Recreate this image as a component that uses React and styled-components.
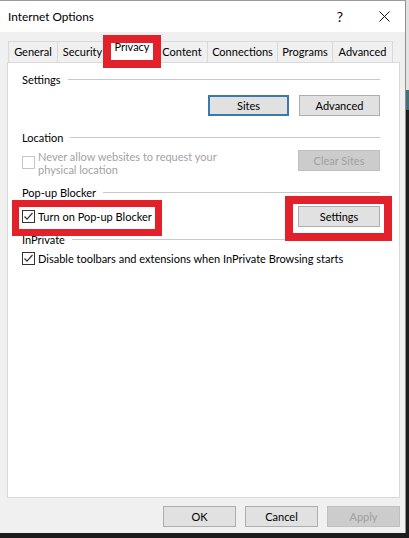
import React from 'react';
import styled, { createGlobalStyle } from 'styled-components';

const FONT = '"Segoe UI", Lato, "Open Sans", sans-serif';
const RED = '#e3212b';

const GlobalStyle = createGlobalStyle`
  html, body {
    margin: 0;
    padding: 0;
  }
  body {
    width: 409px;
    height: 538px;
    overflow: hidden;
    font-family: ${FONT};
    background: linear-gradient(
      to bottom,
      #e2e2e2 0,
      #e2e2e2 90px,
      #3f6f7a 90px,
      #3f6f7a 110px,
      #1c1c1c 110px
    );
  }
`;

const Dialog = styled.div`
  position: relative;
  width: 406px;
  height: 533px;
  box-sizing: border-box;
  background: #f0f0f0;
  border-top: 1px solid #9a9a9a;
  border-right: 1px solid #8f8f8f;
  display: flex;
  flex-direction: column;
  font-size: 11px;
  color: #000;
`;

const TitleBar = styled.div`
  height: 31px;
  background: #fff;
  display: flex;
  align-items: center;
  padding-left: 8px;
`;

const Title = styled.div`
  flex: 1;
  font-size: 11.8px;
  line-height: 16px;
`;

const HelpMark = styled.span`
  font-size: 14px;
  line-height: 16px;
  margin-right: 36px;
`;

const CloseIcon = styled.svg`
  width: 11px;
  height: 11px;
  margin-right: 15px;
`;

const TabBar = styled.div`
  position: relative;
  z-index: 1;
  height: 31px;
  margin-bottom: -1px;
  padding-left: 8px;
  display: flex;
  align-items: flex-end;
`;

const Tab = styled.div`
  box-sizing: border-box;
  width: ${p => p.$w}px;
  height: ${p => (p.$active ? 26 : 21)}px;
  margin-left: ${p => (p.$first ? 0 : p.$active ? -3 : -1)}px;
  margin-right: ${p => (p.$active ? -2 : 0)}px;
  margin-bottom: ${p => (p.$active ? 0 : 1)}px;
  position: relative;
  z-index: ${p => (p.$active ? 2 : 0)};
  background: ${p => (p.$active ? '#fff' : '#f0f0f0')};
  border: 1px solid #d9d9d9;
  border-bottom: none;
  text-align: center;
  line-height: ${p => (p.$active ? 18 : 20)}px;
  white-space: nowrap;
`;

const Panel = styled.div`
  box-sizing: border-box;
  width: 393px;
  height: 436px;
  margin-left: 7px;
  background: #fff;
  border: 1px solid #d9d9d9;
  padding: 9px 19px 0 14px;
  display: flex;
  flex-direction: column;
`;

const GroupHeader = styled.div`
  display: flex;
  align-items: center;
  height: 15px;
  line-height: 15px;
  margin-top: ${p => p.$mt}px;
  &::after {
    content: '';
    flex: 1;
    height: 1px;
    margin-left: 7px;
    background: #c8c8c8;
  }
`;

const ButtonRow = styled.div`
  display: flex;
  justify-content: flex-end;
  gap: 10px;
  margin-top: 8px;
`;

const OptionRow = styled.div`
  display: flex;
  justify-content: space-between;
  align-items: ${p => (p.$top ? 'flex-start' : 'center')};
  margin-top: ${p => p.$mt}px;
`;

const CheckLine = styled.label`
  display: flex;
  align-items: ${p => (p.$top ? 'flex-start' : 'center')};
  color: ${p => (p.$disabled ? '#a3a3a3' : '#000')};
  line-height: ${p => (p.$top ? 13 : 15)}px;
  white-space: nowrap;
`;

const Box = styled.span`
  box-sizing: border-box;
  width: 13px;
  height: 13px;
  flex: none;
  margin-top: ${p => (p.$top ? 6 : 0)}px;
  margin-right: 3px;
  border: 1px solid ${p => (p.$disabled ? '#c6c6c6' : '#333')};
  background: #fff;
  display: flex;
  align-items: center;
  justify-content: center;
`;

const Button = styled.button`
  box-sizing: border-box;
  width: ${p => p.$w || 81}px;
  height: 21px;
  padding: 0;
  font-family: ${FONT};
  font-size: 11px;
  color: ${p => (p.disabled ? '#a0a0a0' : '#000')};
  background: ${p => (p.disabled ? '#cccccc' : '#e1e1e1')};
  border: ${p =>
    p.$focus ? '2px solid #3b78ab' : p.disabled ? '1px solid #bfbfbf' : '1px solid #adadad'};
  border-radius: 0;
`;

const Footer = styled.div`
  display: flex;
  justify-content: flex-end;
  gap: 9px;
  margin-top: 8px;
  padding-right: 5px;
`;

const Highlight = styled.div`
  position: absolute;
  box-sizing: border-box;
  left: ${p => p.$x}px;
  top: ${p => p.$y}px;
  width: ${p => p.$w}px;
  height: ${p => p.$h}px;
  border: ${p => p.$b || 7}px solid ${RED};
  z-index: 5;
  pointer-events: none;
`;

const tabs = [
  { label: 'General', w: 50 },
  { label: 'Security', w: 51 },
  { label: 'Privacy', w: 54, active: true },
  { label: 'Content', w: 52 },
  { label: 'Connections', w: 71 },
  { label: 'Programs', w: 56 },
  { label: 'Advanced', w: 61 },
];

function Check({ checked, disabled, top }) {
  return (
    <Box $disabled={disabled} $top={top}>
      {checked && (
        <svg width="11" height="11" viewBox="0 0 11 11">
          <polyline points="1.5,5.5 4,8.2 9.5,2" fill="none" stroke="#333" strokeWidth="1.2" />
        </svg>
      )}
    </Box>
  );
}

export default function App() {
  return (
    <>
      <GlobalStyle />
      <Dialog>
        <TitleBar>
          <Title>Internet Options</Title>
          <HelpMark>?</HelpMark>
          <CloseIcon viewBox="0 0 11 11">
            <path d="M0.5 0.5 L10.5 10.5 M10.5 0.5 L0.5 10.5" stroke="#111" strokeWidth="1" />
          </CloseIcon>
        </TitleBar>

        <TabBar>
          {tabs.map((t, i) => (
            <Tab key={t.label} $w={t.w} $active={t.active} $first={i === 0}>
              {t.label}
            </Tab>
          ))}
        </TabBar>

        <Panel>
          <GroupHeader $mt={0}>Settings</GroupHeader>
          <ButtonRow>
            <Button $focus>Sites</Button>
            <Button>Advanced</Button>
          </ButtonRow>

          <GroupHeader $mt={14}>Location</GroupHeader>
          <OptionRow $top $mt={5}>
            <CheckLine $top $disabled>
              <Check disabled top />
              <span>
                Never allow websites to request your
                <br />
                physical location
              </span>
            </CheckLine>
            <Button $w={82} disabled>Clear Sites</Button>
          </OptionRow>

          <GroupHeader $mt={9}>Pop-up Blocker</GroupHeader>
          <OptionRow $mt={6}>
            <CheckLine>
              <Check checked />
              <span>Turn on Pop-up Blocker</span>
            </CheckLine>
            <Button $w={82}>Settings</Button>
          </OptionRow>

          <GroupHeader $mt={5}>InPrivate</GroupHeader>
          <OptionRow $mt={4}>
            <CheckLine>
              <Check checked />
              <span>Disable toolbars and extensions when InPrivate Browsing starts</span>
            </CheckLine>
          </OptionRow>
        </Panel>

        <Footer>
          <Button $w={73}>OK</Button>
          <Button $w={73}>Cancel</Button>
          <Button $w={73} disabled>Apply</Button>
        </Footer>

        <Highlight $x={103} $y={34} $w={58} $h={33} $b={8} />
        <Highlight $x={12} $y={199} $w={150} $h={36} />
        <Highlight $x={285} $y={195} $w={107} $h={45} $b={8} />
      </Dialog>
    </>
  );
}
